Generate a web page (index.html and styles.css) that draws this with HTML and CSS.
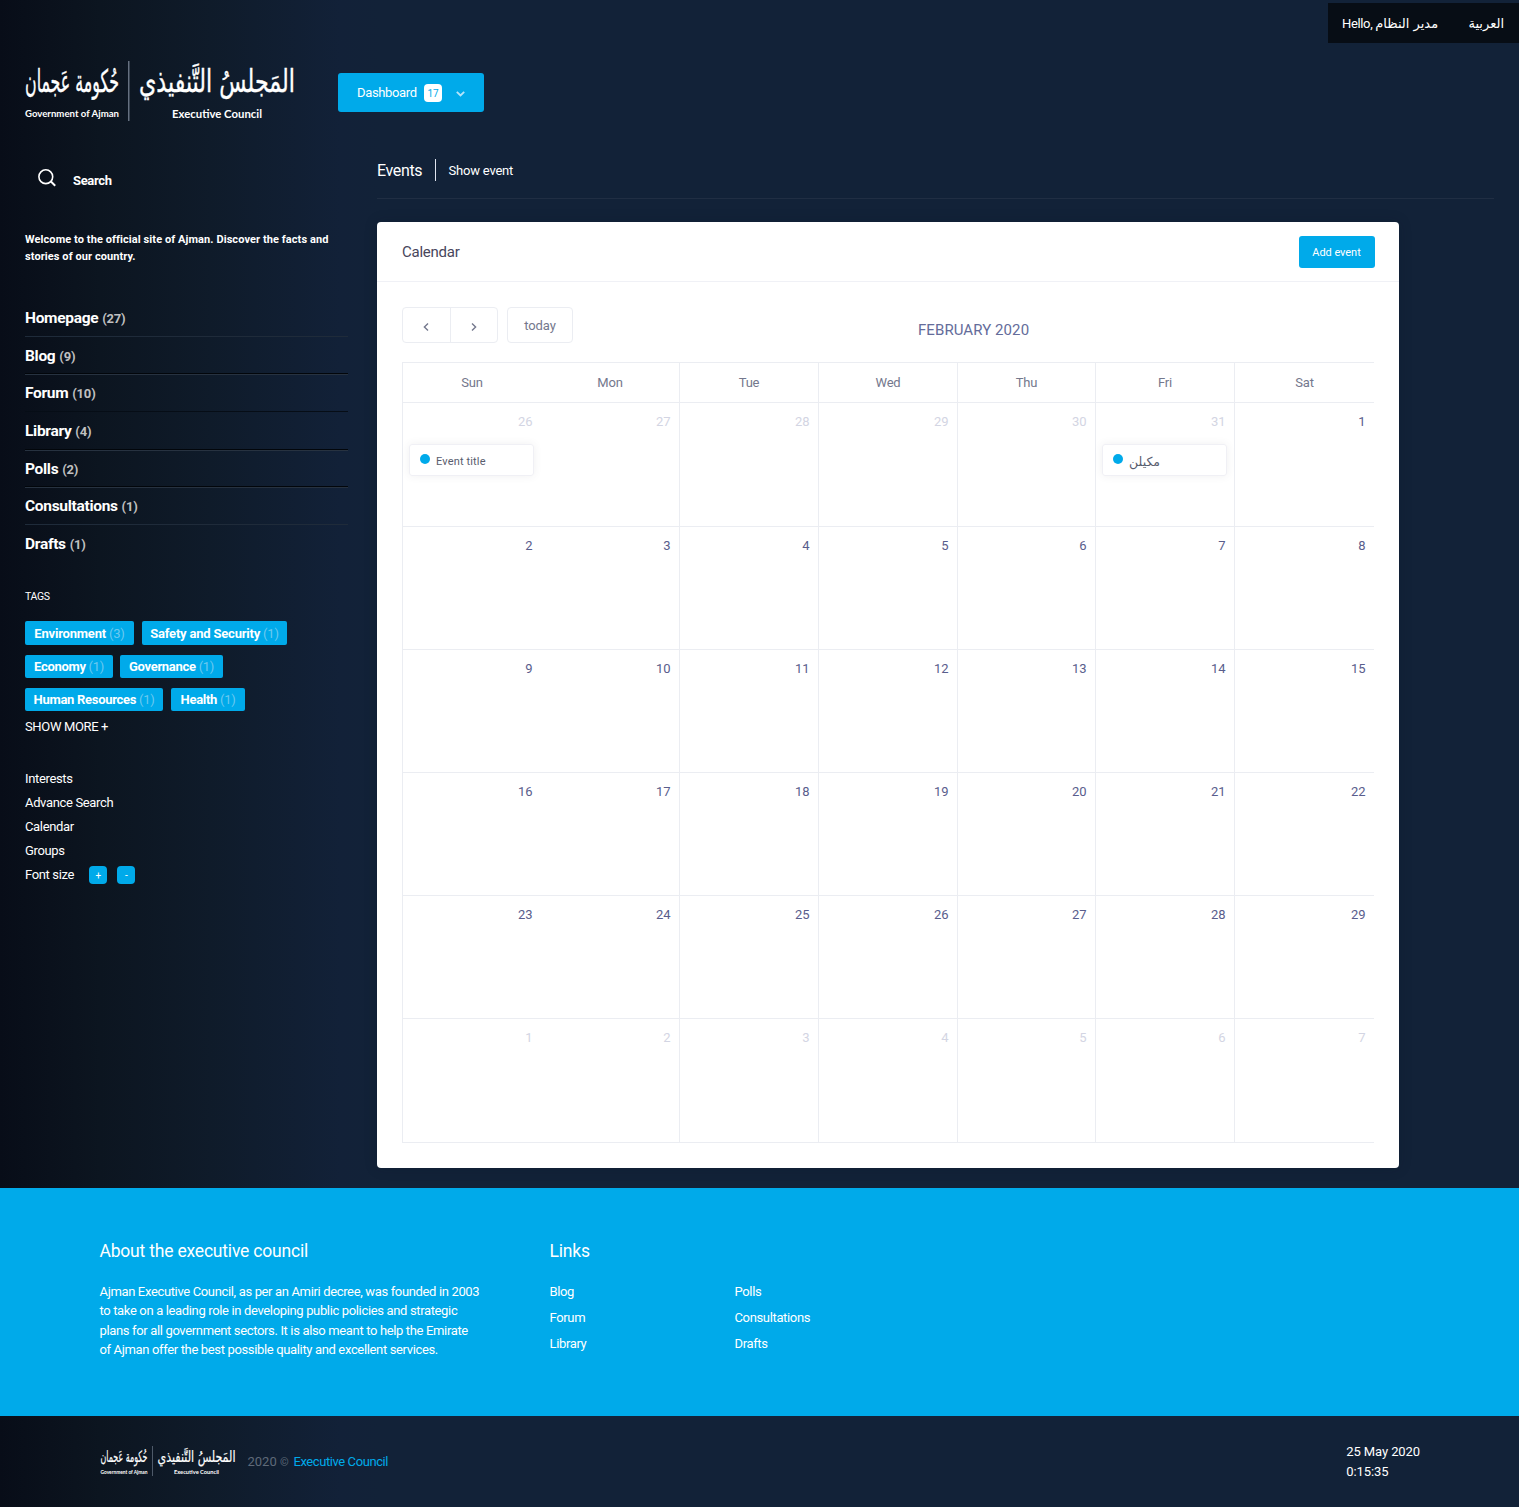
FILE: index.html
```html
<!DOCTYPE html>
<html lang="en">
<head>
<meta charset="utf-8">
<title>Events - Executive Council</title>
<link rel="stylesheet" href="styles.css">
</head>
<body>
<div class="topbar"><div class="userbar"><span class="hello">Hello, <span class="ar" dir="rtl">مدير النظام</span></span><span class="ar lang">العربية</span></div></div>

<header class="brand">
  <svg class="logo" viewBox="0 0 270 60">
    <g id="logo">
      <g fill="#fff" stroke="#fff" stroke-width=".3" direction="rtl" text-anchor="middle" transform="scale(1 1.250)">
        <text class="script" x="47" y="25" textLength="94" lengthAdjust="spacingAndGlyphs">حُكومة عَجمان</text>
        <text class="script" x="192" y="25" textLength="156" lengthAdjust="spacingAndGlyphs">المَجلسُ التَّنفيذي</text>
      </g>
      <rect x="103" y="0" width="1.500" height="60" fill="#657080"/>
      <g class="latin" fill="#fff">
        <text x="0" y="55.500" font-size="9.500" textLength="94" lengthAdjust="spacingAndGlyphs">Government of Ajman</text>
        <text x="147" y="56.500" font-size="10.500" textLength="90" lengthAdjust="spacingAndGlyphs">Executive Council</text>
      </g>
    </g>
  </svg>
  <a class="dash"><span class="dash-label">Dashboard</span><span class="badge">17</span>
    <svg width="9" height="6" viewBox="0 0 9 6" fill="none" stroke="#b5e4fa" stroke-width="1.800"><path d="M.8.8 4.500 4.500 8.200.8"/></svg></a>
</header>

<div class="main">
  <aside class="side">
    <div class="search">
      <svg width="19" height="18" viewBox="0 0 19 18" fill="none" stroke="#fff"><circle cx="7.800" cy="7.700" r="6.900" stroke-width="1.600"/><path d="m12.700 12.300 4.500 4.500" stroke-width="2"/></svg>
      <span>Search</span>
    </div>
    <p class="welcome">Welcome to the official site of Ajman. Discover the facts and<br>stories of our country.</p>
    <ul class="menu">
      <li class="light"><b>Homepage</b> <i>(27)</i></li>
      <li class="both"><b>Blog</b> <i>(9)</i></li>
      <li class="dark"><b>Forum</b> <i>(10)</i></li>
      <li class="both"><b>Library</b> <i>(4)</i></li>
      <li class="both"><b>Polls</b> <i>(2)</i></li>
      <li class="light"><b>Consultations</b> <i>(1)</i></li>
      <li><b>Drafts</b> <i>(1)</i></li>
    </ul>
    <h6 class="tags-title">TAGS</h6>
    <div class="tags">
      <div><a style="width:109px"><b>Environment</b> (3)</a><a style="width:145px"><b>Safety and Security</b> (1)</a></div>
      <div class="tight"><a style="width:88px"><b>Economy</b> (1)</a><a style="width:103px"><b>Governance</b> (1)</a></div>
      <div><a style="width:138px"><b>Human Resources</b> (1)</a><a style="width:74px"><b>Health</b> (1)</a></div>
    </div>
    <div class="more">SHOW MORE +</div>
    <ul class="links">
      <li>Interests</li><li>Advance Search</li><li>Calendar</li><li>Groups</li>
      <li>Font size <span class="fs">+</span><span class="fs">-</span></li>
    </ul>
  </aside>

  <section class="content">
    <div class="crumbs"><h1>Events</h1><span>Show event</span></div>
    <div class="card">
      <div class="card-head"><h2>Calendar</h2><a class="add">Add event</a></div>
      <div class="card-body">
        <div class="tools">
          <div class="pager">
            <span><svg width="6" height="8" viewBox="0 0 6 8" fill="none" stroke="#74788d" stroke-width="1.400"><path d="M5 .6 1.400 4 5 7.400"/></svg></span>
            <span><svg width="6" height="8" viewBox="0 0 6 8" fill="none" stroke="#74788d" stroke-width="1.400"><path d="M1 .6 4.600 4 1 7.400"/></svg></span>
          </div>
          <span class="today">today</span>
          <h3>FEBRUARY 2020</h3>
        </div>
        <div class="cal">
          <div class="row names"><div>Sun</div><div>Mon</div><div>Tue</div><div>Wed</div><div>Thu</div><div>Fri</div><div>Sat</div></div>
          <div class="row tall"><div class="off">26<span class="event">Event title</span></div><div class="off">27</div><div class="off">28</div><div class="off">29</div><div class="off">30</div><div class="off">31<span class="event"><span class="ar">مكيلن</span></span></div><div>1</div></div>
          <div class="row"><div>2</div><div>3</div><div>4</div><div>5</div><div>6</div><div>7</div><div>8</div></div>
          <div class="row"><div>9</div><div>10</div><div>11</div><div>12</div><div>13</div><div>14</div><div>15</div></div>
          <div class="row"><div>16</div><div>17</div><div>18</div><div>19</div><div>20</div><div>21</div><div>22</div></div>
          <div class="row"><div>23</div><div>24</div><div>25</div><div>26</div><div>27</div><div>28</div><div>29</div></div>
          <div class="row tall"><div class="off">1</div><div class="off">2</div><div class="off">3</div><div class="off">4</div><div class="off">5</div><div class="off">6</div><div class="off">7</div></div>
        </div>
      </div>
    </div>
  </section>
</div>

<footer class="about">
  <div class="about-text">
    <h4>About the executive council</h4>
    <p>Ajman Executive Council, as per an Amiri decree, was founded in 2003<br>to take on a leading role in developing public policies and strategic<br>plans for all government sectors. It is also meant to help the Emirate<br>of Ajman offer the best possible quality and excellent services.</p>
  </div>
  <div>
    <h4>Links</h4>
    <ul class="foot-links"><li>Blog</li><li>Polls</li><li>Forum</li><li>Consultations</li><li>Library</li><li>Drafts</li></ul>
  </div>
</footer>
<div class="bottom">
  <svg class="logo small" viewBox="0 0 270 60"><use href="#logo"/></svg>
  <span class="copy">2020 <small>©</small></span><a>Executive Council</a>
  <div class="clock">25 May 2020<br>0:15:35</div>
</div>
</body>
</html>
```
FILE: styles.css
```css
* { box-sizing: border-box; }
body {
  margin: 0;
  width: 1519px;
  height: 1507px;
  overflow: hidden;
  display: flex;
  flex-direction: column;
  font: 13px/20px Roboto, "DejaVu Sans", sans-serif;
  letter-spacing: -0.35px;
  color: #fff;
  background: linear-gradient(90deg, #080d18 0, #0c1520 100px, #0f1b2a 210px, #122138 340px, #122238 380px);
}
h1, h2, h3, h4, h6, p, ul { margin: 0; padding: 0; font-weight: 400; }
ul { list-style: none; }
.script { font: 25px "DejaVu Sans", sans-serif; letter-spacing: 0; }
.latin { font-family: Lato, sans-serif; font-weight: 700; letter-spacing: 0; }
.ar { font-family: "DejaVu Sans", sans-serif; font-size: 13px; letter-spacing: 0; }

.topbar { display: flex; justify-content: flex-end; height: 43px; padding-top: 3px; }
.userbar { display: flex; justify-content: space-between; width: 191px; padding: 0 15px 0 14px; background: #070d15; line-height: 41px; height: 40px; white-space: nowrap; }

.brand { display: flex; height: 107px; padding: 18px 0 0 25px; }
.logo { width: 270px; height: 60px; overflow: visible; }
.dash {
  display: flex;
  align-items: center;
  width: 146px;
  height: 39px;
  margin: 12px 0 0 43px;
  padding-left: 19px;
  border-radius: 3px;
  background: #00aaea;
}
.dash-label { width: 59px; }
.badge { width: 18px; height: 18px; margin: 1px 14px 0 8px; border-radius: 4px; background: #fff; color: #00aaea; font-size: 10px; line-height: 19px; text-align: center; letter-spacing: 0; }
.dash svg { margin-top: 3px; }

.main { display: flex; height: 1038px; padding-left: 25px; }
.side { width: 323px; margin-right: 29px; }
.search { display: flex; gap: 16px; height: 81px; padding: 19px 0 0 13px; font-weight: 700; line-height: 23px; }
.welcome { height: 68px; font-size: 11px; font-weight: 700; line-height: 17px; letter-spacing: .08px; white-space: nowrap; }
.menu li { height: 37.670px; border-bottom: 1px solid transparent; line-height: 38px; }
.menu b { font-size: 15.500px; letter-spacing: -.3px; }
.menu i { margin-left: 1px; color: #c0c0c0; font-style: normal; font-weight: 700; font-size: 13px; letter-spacing: -.2px; }
.menu .light { border-color: #1f2b3a; }
.menu .dark { border-color: #060d16; }
.menu .both { border-color: #02060b; box-shadow: 0 1px #273240; }
.tags-title { height: 58px; padding-top: 24px; font-size: 10.500px; }
.tags { display: flex; flex-direction: column; gap: 10px; letter-spacing: -.2px; }
.tags div { display: flex; gap: 8px; }
.tags .tight { gap: 7px; }
.tags a { height: 23px; border-radius: 2px; background: #00aaea; color: #6cc9f0; line-height: 24px; text-align: center; white-space: nowrap; }
.tags div:first-child a { height: 24px; line-height: 25px; }
.tags div:last-child, .tags .tight { letter-spacing: -.3px; }
.tags b { color: #fff; }
.more { height: 50px; padding-top: 6px; }
.links { padding-top: 6px; line-height: 24px; }
.links li { display: flex; height: 24px; align-items: center; }
.fs { width: 18px; height: 18px; margin-left: 10px; border-radius: 4px; background: #00aaea; font-size: 10px; line-height: 19px; text-align: center; }
.fs:first-of-type { margin-left: 15px; }

.content { width: 1117px; }
.crumbs { display: flex; align-items: center; height: 49px; padding-bottom: 8px; border-bottom: 1px solid #202e43; }
.crumbs h1 { width: 59px; height: 22px; border-right: 1px solid #dfe4ee; font-size: 16px; line-height: 23px; }
.crumbs span { margin: 1px 0 0 12.500px; letter-spacing: -.2px; }
.card { width: 1022px; height: 946px; margin-top: 23px; border-radius: 4px; background: #fff; box-shadow: 0 0 13px rgba(10, 20, 40, .2); }
.card-head { display: flex; justify-content: space-between; height: 60px; padding: 14px 24.500px 0 25px; border-bottom: 1px solid #f0f1f6; }
.card-head h2 { color: #48465b; font-size: 15px; line-height: 32px; letter-spacing: -.25px; }
.add { width: 76px; height: 32px; border-radius: 3px; background: #00aaea; font-size: 11px; line-height: 33px; text-align: center; letter-spacing: -.05px; }
.card-body { padding: 25px 25px 0; color: #74788d; }
.tools { display: flex; height: 55px; }
.pager, .today { height: 36px; border: 1px solid #ebedf2; border-radius: 4px; }
.pager { display: flex; width: 96px; margin-right: 9px; }
.pager span { display: flex; justify-content: center; align-items: center; width: 47px; padding: 4px 1px 0 0; }
.pager span + span { border-left: 1px solid #ebedf2; }
.today { width: 66px; line-height: 35px; text-align: center; letter-spacing: -.1px; }
.tools h3 { margin-left: 345px; color: #646c9a; font-size: 15px; line-height: 46px; letter-spacing: .08px; }
.cal { width: 972px; border: 1px solid #ebedf2; border-width: 1px 0 0 1px; }
.row { display: grid; grid-template-columns: 138px 138px 139px 139px 138px 139px minmax(0, 1fr); height: 123px; border-bottom: 1px solid #ebedf2; letter-spacing: -.1px; }
.row.tall { height: 124px; }
.row.names { height: 40px; letter-spacing: -.2px; }
.row div { min-width: 0; padding: 9px 8.500px 0; text-align: right; border-left: 1px solid #ebedf2; color: #595d8c; }
.row div:nth-child(-n+2) { border-left: 0; }
.row div.off { color: #d3d5e3; }
.row.names div { padding: 10px 0 0; text-align: center; color: #74788d; }
.event {
  display: flex;
  align-items: center;
  gap: 6px;
  width: 125px;
  height: 32px;
  margin: 12px 0 0 -2.500px;
  padding: 3px 10px 0;
  border: 1px solid #f0f0f5;
  border-radius: 3px;
  box-shadow: 0 0 8px rgba(69, 65, 78, .08);
  color: #595d6e;
  font-size: 11px;
  letter-spacing: .15px;
}
.event::before { content: ""; width: 10px; height: 10px; margin-top: -5px; border-radius: 50%; background: #00aaea; }
.event .ar { font-size: 12.500px; }

.about { display: flex; height: 228px; padding: 53px 0 0 99.500px; background: #00aaea; }
.about-text { width: 450px; }
.about h4 { height: 41px; font-size: 17.500px; letter-spacing: -.2px; }
.about p { line-height: 19.400px; white-space: nowrap; }
.foot-links { display: grid; grid-template-columns: 185px 185px; line-height: 20px; row-gap: 6px; }
.bottom { display: flex; height: 91px; padding: 30px 0 0 99.500px; }
.logo.small { width: 136px; height: 30px; margin-right: 12px; }
.bottom .copy, .bottom a { line-height: 32px; }
.copy { width: 46px; color: #5f6a79; letter-spacing: 0; }
.copy small { font-size: 11px; }
.bottom a { color: #00aaea; letter-spacing: -.42px; }
.clock { margin: -4px 99px 0 auto; line-height: 19.500px; letter-spacing: -.1px; }
```
